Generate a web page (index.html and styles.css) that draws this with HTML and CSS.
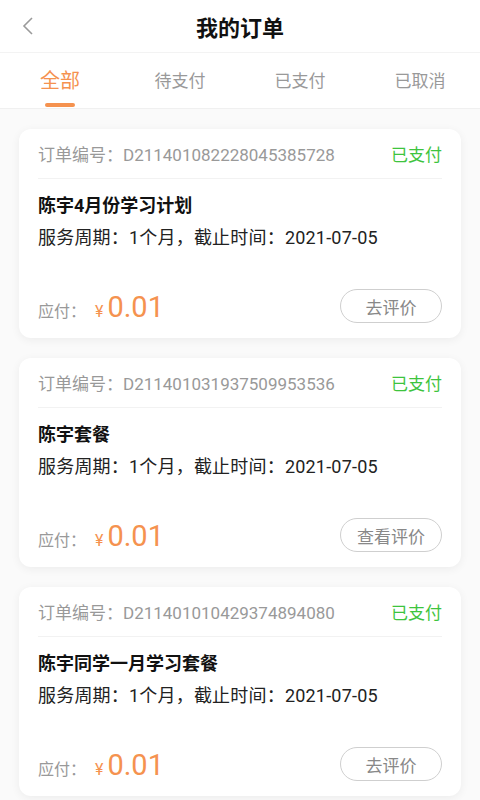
FILE: index.html
```html
<!DOCTYPE html>
<html lang="zh-CN">
<head>
    <meta charset="UTF-8">
    <meta name="viewport" content="width=device-width, initial-scale=1.0">
    <title>我的订单</title>
    <link rel="stylesheet" href="styles.css">
</head>
<body>
    <div class="header">
        <svg class="back" width="14" height="20" viewBox="0 0 14 20">
            <path d="M11 2 L3 10 L11 18" fill="none" stroke="#9a9a9a" stroke-width="1.6"/>
        </svg>
        <h1>我的订单</h1>
    </div>

    <div class="tabs">
        <div class="tab active">全部</div>
        <div class="tab">待支付</div>
        <div class="tab">已支付</div>
        <div class="tab">已取消</div>
    </div>

    <div class="list">
        <div class="card">
            <div class="card-head">
                <span class="order-no">订单编号：D211401082228045385728</span>
                <span class="status">已支付</span>
            </div>
            <div class="title">陈宇4月份学习计划</div>
            <div class="info">服务周期：1个月，截止时间：2021-07-05</div>
            <div class="card-foot">
                <div class="price">
                    <span class="label">应付：</span>
                    <span class="yen">¥</span>
                    <span class="amount">0.01</span>
                </div>
                <button class="btn">去评价</button>
            </div>
        </div>

        <div class="card">
            <div class="card-head">
                <span class="order-no">订单编号：D211401031937509953536</span>
                <span class="status">已支付</span>
            </div>
            <div class="title">陈宇套餐</div>
            <div class="info">服务周期：1个月，截止时间：2021-07-05</div>
            <div class="card-foot">
                <div class="price">
                    <span class="label">应付：</span>
                    <span class="yen">¥</span>
                    <span class="amount">0.01</span>
                </div>
                <button class="btn">查看评价</button>
            </div>
        </div>

        <div class="card">
            <div class="card-head">
                <span class="order-no">订单编号：D211401010429374894080</span>
                <span class="status">已支付</span>
            </div>
            <div class="title">陈宇同学一月学习套餐</div>
            <div class="info">服务周期：1个月，截止时间：2021-07-05</div>
            <div class="card-foot">
                <div class="price">
                    <span class="label">应付：</span>
                    <span class="yen">¥</span>
                    <span class="amount">0.01</span>
                </div>
                <button class="btn">去评价</button>
            </div>
        </div>
    </div>
</body>
</html>
```

FILE: styles.css
```css
/* page */
body { margin: 0; font-family: Roboto, "Noto Sans CJK SC", sans-serif; background: #fafafa; color: #222; }

/* top bar */
.header { height: 52px; display: flex; align-items: center; justify-content: center; background: #fff; border-bottom: 1px solid #f3f3f3; position: relative; }
.header h1 { margin: 0; font-size: 22px; font-weight: bold; color: #111; }
.back { position: absolute; left: 21px; top: 16px; }

/* tabs */
.tabs { display: flex; height: 55px; background: #fff; border-bottom: 1px solid #f0f0f0; }
.tab { flex: 1; text-align: center; font-size: 17px; color: #999; padding-top: 15px; line-height: 26px; position: relative; }
.tab.active { color: #f5924f; font-size: 20px; }
.tab.active::after { content: ""; position: absolute; left: 45px; bottom: 1px; width: 30px; height: 4px; border-radius: 2px; background: #f5924f; }

/* order cards */
.list { padding: 20px 19px 20px; display: flex; flex-direction: column; gap: 20px; }
.card { height: 209px; box-sizing: border-box; padding: 0 19px 15px; background: #fff; border-radius: 12px; box-shadow: 0 2px 10px rgba(0, 0, 0, 0.06); display: flex; flex-direction: column; }
.card-head { height: 49px; display: flex; align-items: center; justify-content: space-between; border-bottom: 1px solid #f2f2f2; }
.order-no { font-size: 17px; color: #999; }
.status { font-size: 17px; color: #3ec43e; }
.title { margin-top: 14px; font-size: 18px; line-height: 26px; font-weight: bold; color: #111; }
.info { margin-top: 6px; font-size: 18px; line-height: 26px; color: #222; letter-spacing: 0.2px; }
.card-foot { margin-top: auto; display: flex; align-items: flex-end; justify-content: space-between; }
.price { display: flex; align-items: baseline; }
.label { font-size: 16px; color: #999; }
.yen { font-size: 16px; color: #f5924f; margin: 0 4px 0 9px; }
.amount { font-size: 29px; color: #f5924f; line-height: 32px; }
.btn { width: 102px; height: 34px; border: 1px solid #cfcfcf; border-radius: 17px; background: #fff; color: #888; font-family: inherit; font-size: 17px; padding: 0; }
```
